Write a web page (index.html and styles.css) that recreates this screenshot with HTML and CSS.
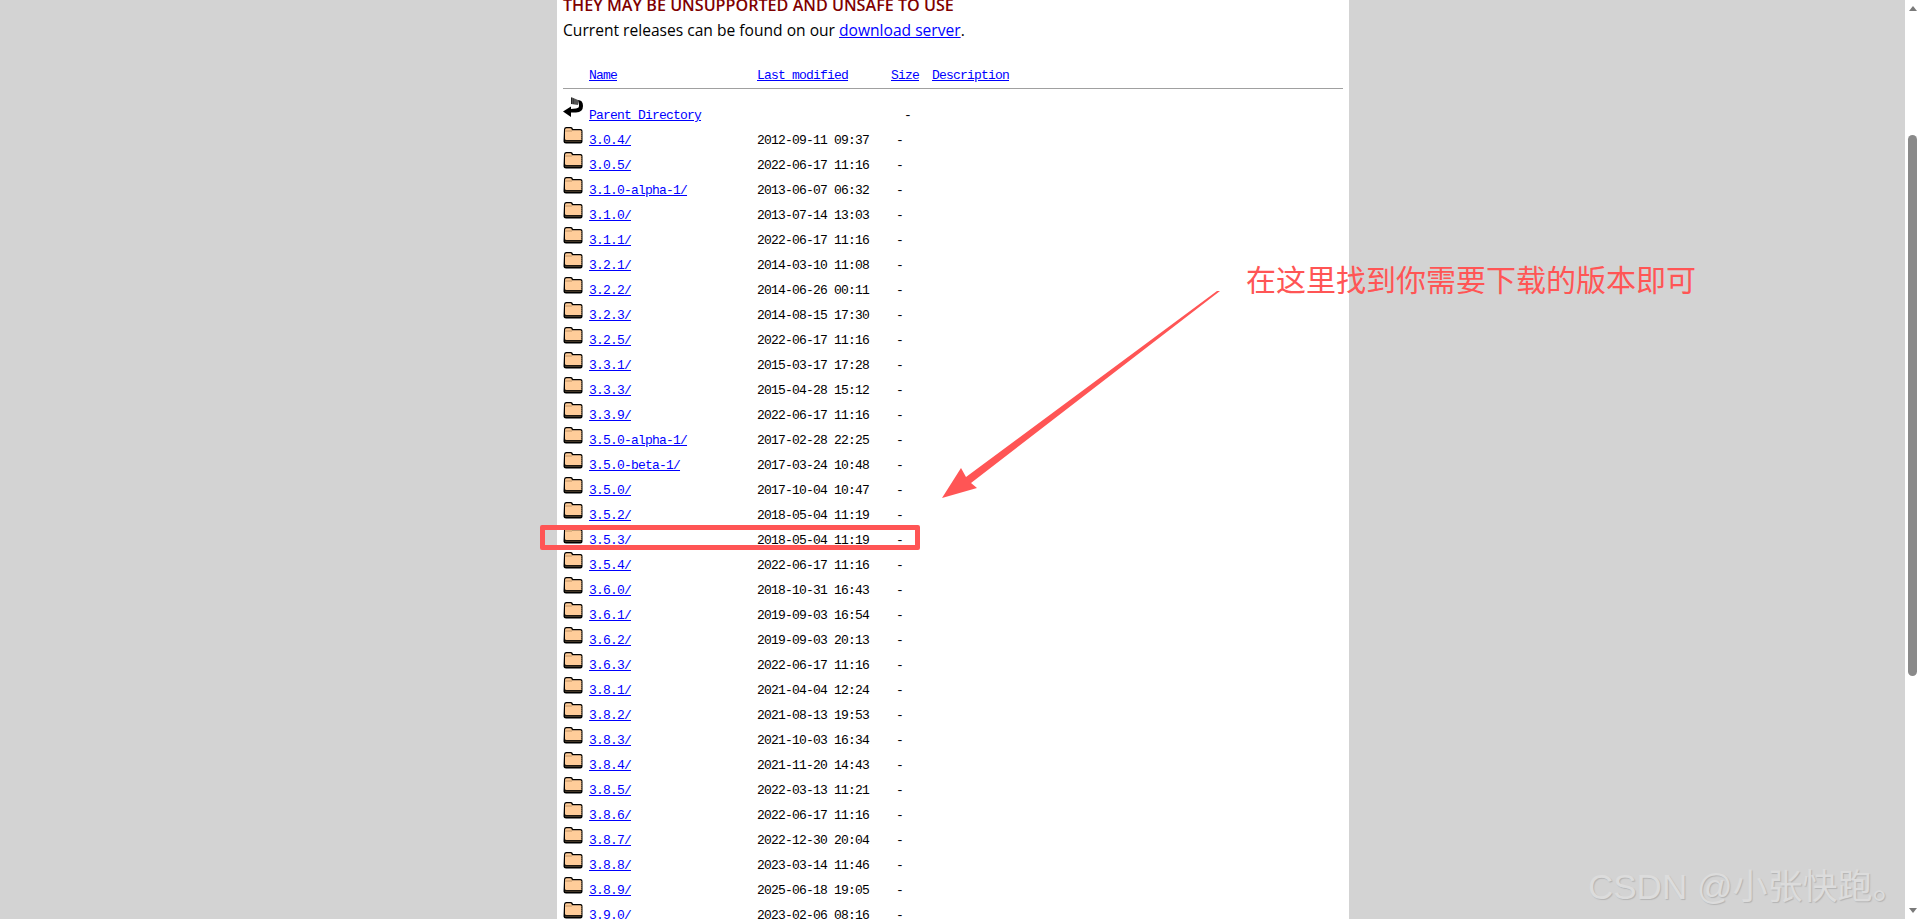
FILE: index.html
```html
<!DOCTYPE html>
<html lang="en">
<head>
  <meta charset="UTF-8" />
  <title>Index of /dist/zookeeper</title>
  <link rel="stylesheet" href="styles.css">
</head>
<body>
  <svg class="defs" width="0" height="0">
    <symbol id="folder" viewBox="0 0 20 18">
      <path d="M1 3.500 Q1 1 3 1 H8 Q9.500 1 10 3 H17.500 Q19.500 3 19.500 5 V15.500 Q19.500 17.500 17.500 17.500 H3 Q0.500 17.500 0.500 15.500 Z" fill="#000"/>
      <path d="M2 4 Q2 2.200 3.500 2.200 H7.500 Q8.500 2.200 9 4.200 H17 Q18.300 4.200 18.300 5.500 V14 H3.500 Q2 14 2 13 Z" fill="#ffcc99"/>
      <path d="M2 5 H9" stroke="#a87c50" stroke-width="0.700"/>
      <path d="M2.500 15.200 H18.500" stroke="#c69c6d" stroke-width="1" stroke-dasharray="1 1"/>
      <path d="M18.800 5 V15" stroke="#c69c6d" stroke-width="0.600" stroke-dasharray="1 1"/>
    </symbol>
    <symbol id="back" viewBox="0 0 20 21">
      <path d="M8 0 L15 3 L15 8 L8 7 Z" fill="#555"/>
      <path d="M8 1 H9 V7 H8 Z M10.500 1.500 H11 V7 H10.500 Z" fill="#222"/>
      <path d="M15 3 Q20 3 20 9 Q20 15 13 15.500 L8 15.500 L8 20 L0 14.500 L8 9.500 L8 12 L13 11.500 Q16.500 11 16 8 Z" fill="#000"/>
    </symbol>
  </svg>

  <div class="shell">
    <div class="viewport">
      <div class="page">
        <div class="warning">THEY MAY BE UNSUPPORTED AND UNSAFE TO USE</div>
        <div class="note">Current releases can be found on our <a href="#">download server</a>.</div>

        <div class="listing">
          <div class="row head">
            <span class="c-icon"></span>
            <span class="c-name"><a href="#">Name</a></span>
            <span class="c-date"><a href="#">Last modified</a></span>
            <span class="c-size"><a href="#">Size</a></span>
            <span class="c-desc"><a href="#">Description</a></span>
          </div>
          <hr class="rule" />

          <div class="row parent">
            <span class="c-icon"><svg class="ico-back"><use href="#back"/></svg></span>
            <span class="c-name"><a href="#">Parent Directory</a></span>
            <span class="c-date"></span>
            <span class="c-size">-</span>
          </div>
          <div class="row"><span class="c-icon"><svg class="ico"><use href="#folder"/></svg></span><span class="c-name"><a href="#">3.0.4/</a></span><span class="c-date">2012-09-11 09:37</span><span class="c-size">-</span></div>
          <div class="row"><span class="c-icon"><svg class="ico"><use href="#folder"/></svg></span><span class="c-name"><a href="#">3.0.5/</a></span><span class="c-date">2022-06-17 11:16</span><span class="c-size">-</span></div>
          <div class="row"><span class="c-icon"><svg class="ico"><use href="#folder"/></svg></span><span class="c-name"><a href="#">3.1.0-alpha-1/</a></span><span class="c-date">2013-06-07 06:32</span><span class="c-size">-</span></div>
          <div class="row"><span class="c-icon"><svg class="ico"><use href="#folder"/></svg></span><span class="c-name"><a href="#">3.1.0/</a></span><span class="c-date">2013-07-14 13:03</span><span class="c-size">-</span></div>
          <div class="row"><span class="c-icon"><svg class="ico"><use href="#folder"/></svg></span><span class="c-name"><a href="#">3.1.1/</a></span><span class="c-date">2022-06-17 11:16</span><span class="c-size">-</span></div>
          <div class="row"><span class="c-icon"><svg class="ico"><use href="#folder"/></svg></span><span class="c-name"><a href="#">3.2.1/</a></span><span class="c-date">2014-03-10 11:08</span><span class="c-size">-</span></div>
          <div class="row"><span class="c-icon"><svg class="ico"><use href="#folder"/></svg></span><span class="c-name"><a href="#">3.2.2/</a></span><span class="c-date">2014-06-26 00:11</span><span class="c-size">-</span></div>
          <div class="row"><span class="c-icon"><svg class="ico"><use href="#folder"/></svg></span><span class="c-name"><a href="#">3.2.3/</a></span><span class="c-date">2014-08-15 17:30</span><span class="c-size">-</span></div>
          <div class="row"><span class="c-icon"><svg class="ico"><use href="#folder"/></svg></span><span class="c-name"><a href="#">3.2.5/</a></span><span class="c-date">2022-06-17 11:16</span><span class="c-size">-</span></div>
          <div class="row"><span class="c-icon"><svg class="ico"><use href="#folder"/></svg></span><span class="c-name"><a href="#">3.3.1/</a></span><span class="c-date">2015-03-17 17:28</span><span class="c-size">-</span></div>
          <div class="row"><span class="c-icon"><svg class="ico"><use href="#folder"/></svg></span><span class="c-name"><a href="#">3.3.3/</a></span><span class="c-date">2015-04-28 15:12</span><span class="c-size">-</span></div>
          <div class="row"><span class="c-icon"><svg class="ico"><use href="#folder"/></svg></span><span class="c-name"><a href="#">3.3.9/</a></span><span class="c-date">2022-06-17 11:16</span><span class="c-size">-</span></div>
          <div class="row"><span class="c-icon"><svg class="ico"><use href="#folder"/></svg></span><span class="c-name"><a href="#">3.5.0-alpha-1/</a></span><span class="c-date">2017-02-28 22:25</span><span class="c-size">-</span></div>
          <div class="row"><span class="c-icon"><svg class="ico"><use href="#folder"/></svg></span><span class="c-name"><a href="#">3.5.0-beta-1/</a></span><span class="c-date">2017-03-24 10:48</span><span class="c-size">-</span></div>
          <div class="row"><span class="c-icon"><svg class="ico"><use href="#folder"/></svg></span><span class="c-name"><a href="#">3.5.0/</a></span><span class="c-date">2017-10-04 10:47</span><span class="c-size">-</span></div>
          <div class="row"><span class="c-icon"><svg class="ico"><use href="#folder"/></svg></span><span class="c-name"><a href="#">3.5.2/</a></span><span class="c-date">2018-05-04 11:19</span><span class="c-size">-</span></div>
          <div class="row"><span class="c-icon"><svg class="ico"><use href="#folder"/></svg></span><span class="c-name"><a href="#">3.5.3/</a></span><span class="c-date">2018-05-04 11:19</span><span class="c-size">-</span></div>
          <div class="row"><span class="c-icon"><svg class="ico"><use href="#folder"/></svg></span><span class="c-name"><a href="#">3.5.4/</a></span><span class="c-date">2022-06-17 11:16</span><span class="c-size">-</span></div>
          <div class="row"><span class="c-icon"><svg class="ico"><use href="#folder"/></svg></span><span class="c-name"><a href="#">3.6.0/</a></span><span class="c-date">2018-10-31 16:43</span><span class="c-size">-</span></div>
          <div class="row"><span class="c-icon"><svg class="ico"><use href="#folder"/></svg></span><span class="c-name"><a href="#">3.6.1/</a></span><span class="c-date">2019-09-03 16:54</span><span class="c-size">-</span></div>
          <div class="row"><span class="c-icon"><svg class="ico"><use href="#folder"/></svg></span><span class="c-name"><a href="#">3.6.2/</a></span><span class="c-date">2019-09-03 20:13</span><span class="c-size">-</span></div>
          <div class="row"><span class="c-icon"><svg class="ico"><use href="#folder"/></svg></span><span class="c-name"><a href="#">3.6.3/</a></span><span class="c-date">2022-06-17 11:16</span><span class="c-size">-</span></div>
          <div class="row"><span class="c-icon"><svg class="ico"><use href="#folder"/></svg></span><span class="c-name"><a href="#">3.8.1/</a></span><span class="c-date">2021-04-04 12:24</span><span class="c-size">-</span></div>
          <div class="row"><span class="c-icon"><svg class="ico"><use href="#folder"/></svg></span><span class="c-name"><a href="#">3.8.2/</a></span><span class="c-date">2021-08-13 19:53</span><span class="c-size">-</span></div>
          <div class="row"><span class="c-icon"><svg class="ico"><use href="#folder"/></svg></span><span class="c-name"><a href="#">3.8.3/</a></span><span class="c-date">2021-10-03 16:34</span><span class="c-size">-</span></div>
          <div class="row"><span class="c-icon"><svg class="ico"><use href="#folder"/></svg></span><span class="c-name"><a href="#">3.8.4/</a></span><span class="c-date">2021-11-20 14:43</span><span class="c-size">-</span></div>
          <div class="row"><span class="c-icon"><svg class="ico"><use href="#folder"/></svg></span><span class="c-name"><a href="#">3.8.5/</a></span><span class="c-date">2022-03-13 11:21</span><span class="c-size">-</span></div>
          <div class="row"><span class="c-icon"><svg class="ico"><use href="#folder"/></svg></span><span class="c-name"><a href="#">3.8.6/</a></span><span class="c-date">2022-06-17 11:16</span><span class="c-size">-</span></div>
          <div class="row"><span class="c-icon"><svg class="ico"><use href="#folder"/></svg></span><span class="c-name"><a href="#">3.8.7/</a></span><span class="c-date">2022-12-30 20:04</span><span class="c-size">-</span></div>
          <div class="row"><span class="c-icon"><svg class="ico"><use href="#folder"/></svg></span><span class="c-name"><a href="#">3.8.8/</a></span><span class="c-date">2023-03-14 11:46</span><span class="c-size">-</span></div>
          <div class="row"><span class="c-icon"><svg class="ico"><use href="#folder"/></svg></span><span class="c-name"><a href="#">3.8.9/</a></span><span class="c-date">2025-06-18 19:05</span><span class="c-size">-</span></div>
          <div class="row"><span class="c-icon"><svg class="ico"><use href="#folder"/></svg></span><span class="c-name"><a href="#">3.9.0/</a></span><span class="c-date">2023-02-06 08:16</span><span class="c-size">-</span></div>
        </div>
      </div>

      <!-- annotations drawn on top of the screenshot -->
      <div class="mark-box"></div>
      <svg class="mark-arrow" width="1920" height="919">
        <polygon points="1220,291 1217,291 966,477 961,468 942,498 977,488 971,483" fill="#ff5555"/>
      </svg>
      <div class="mark-text">在这里找到你需要下载的版本即可</div>
      <div class="watermark">CSDN @小张快跑。</div>
    </div>

    <div class="scrollbar">
      <div class="sb-up"></div>
      <div class="sb-track"><div class="sb-thumb"></div></div>
      <div class="sb-down"></div>
    </div>
  </div>
</body>
</html>
```

FILE: styles.css
```css
html, body {
  margin: 0;
  padding: 0;
  height: 100%;
  overflow: hidden;
}
.defs {
  position: absolute;
}
.shell {
  display: flex;
  height: 919px;
  background: #d3d3d3;
}
.viewport {
  flex: 1;
  position: relative;
  overflow: hidden;
}
.page {
  display: flow-root;
  width: 780px;
  height: 919px;
  margin-left: 557px;
  padding: 0 6px;
  background: #fff;
  font-family: "Open Sans", "Noto Sans", sans-serif;
  font-size: 15.6px;
  color: #000;
}
.warning {
  margin-top: -8px;
  height: 26px;
  line-height: 26px;
  font-size: 16.15px;
  font-weight: 600;
  color: #800000;
}
.note {
  height: 24px;
  line-height: 24px;
}
a {
  color: #0000ff;
}
.listing {
  margin-top: 23px;
  font-family: "Liberation Mono", monospace;
  font-size: 13px;
  letter-spacing: -0.8px;
  color: #000;
}
.row {
  display: flex;
  height: 25px;
  line-height: 25px;
  white-space: pre;
}
.head {
  height: 23px;
  line-height: 22px;
}
.rule {
  margin: 0 0 14px;
  border: 0;
  height: 1px;
  background: #a0a0a0;
}
.c-icon {
  width: 26px;
  position: relative;
}
.ico {
  position: absolute;
  left: 0;
  top: -2px;
  width: 20px;
  height: 18px;
}
.ico-back {
  position: absolute;
  left: 0;
  top: -6px;
  width: 20px;
  height: 21px;
}
.c-name {
  width: 168px;
}
.c-date {
  width: 134px;
}
.c-size {
  width: 41px;
  padding-left: 5px;
  box-sizing: border-box;
}
.head .c-size {
  padding-left: 0;
}
.parent .c-size {
  padding-left: 13px;
}
.mark-box {
  position: absolute;
  left: 540px;
  top: 525px;
  width: 370px;
  height: 15px;
  border: 5px solid #ff5555;
  border-radius: 2px;
}
.mark-arrow {
  position: absolute;
  left: 0;
  top: 0;
}
.mark-text {
  position: absolute;
  left: 1246px;
  top: 257px;
  font-family: "Noto Sans CJK SC", sans-serif;
  font-size: 30px;
  line-height: 42px;
  color: #ff5555;
  white-space: nowrap;
}
.watermark {
  position: absolute;
  left: 1588px;
  top: 865px;
  font-family: "Liberation Sans", "Noto Sans CJK SC", sans-serif;
  font-size: 35px;
  line-height: 44px;
  color: #dcdcdc;
  text-shadow: 1px 1px 1px #b4b4b4;
  white-space: nowrap;
}
.scrollbar {
  width: 15px;
  background: #fff;
  display: flex;
  flex-direction: column;
  align-items: center;
}
.sb-up {
  margin-top: 6px;
  border-left: 4.5px solid transparent;
  border-right: 4.5px solid transparent;
  border-bottom: 5px solid #7a7a7a;
}
.sb-track {
  flex: 1;
  width: 9px;
  padding-top: 124px;
}
.sb-thumb {
  height: 541px;
  background: #8a8a8a;
  border-radius: 5px;
}
.sb-down {
  margin-bottom: 6px;
  border-left: 4.5px solid transparent;
  border-right: 4.5px solid transparent;
  border-top: 5px solid #7a7a7a;
}
```
